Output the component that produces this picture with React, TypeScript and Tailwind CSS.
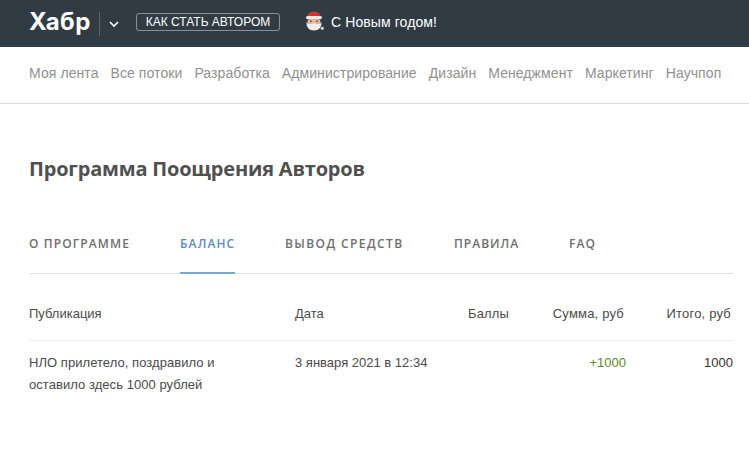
export default function App() {
  const nav = ["Моя лента", "Все потоки", "Разработка", "Администрирование", "Дизайн", "Менеджмент", "Маркетинг", "Научпоп"];
  const tabs = ["О ПРОГРАММЕ", "БАЛАНС", "ВЫВОД СРЕДСТВ", "ПРАВИЛА", "FAQ"];
  return (
    <div className="w-[749px] h-[453px] overflow-hidden bg-white font-['Liberation_Sans',sans-serif]">
      <header className="h-[47px] bg-[#303b44] flex items-center pl-[29px] pb-[3px] text-white">
        <span className="font-['Inter',sans-serif] font-bold text-[24px] tracking-[0.4px] leading-none w-[70px] whitespace-nowrap">Хабр</span>
        <span className="w-px h-[24px] bg-[#5a646c] mt-[3px]" />
        <svg className="ml-[8px] mt-[3px]" width="12" height="8" viewBox="0 0 12 8" fill="none">
          <path d="M2 2l4 4 4-4" stroke="#fff" strokeWidth="1.6" />
        </svg>
        <span className="ml-[16px] h-[18px] w-[144px] border border-[#87929a] rounded-[3px] flex items-center justify-center text-[12px] leading-none">КАК СТАТЬ АВТОРОМ</span>
        <span className="ml-[24px] w-[20px] h-[20px] -mt-[3px]">
          <svg width="20" height="20" viewBox="0 0 20 20">
            <path d="M3 7C3 3 6 .5 10 .5S17 3 17 7z" fill="#d8342f" />
            <rect x="2" y="5" width="16" height="3.200" rx="1.600" fill="#f3e9e4" />
            <rect x="3.500" y="8" width="13" height="7" rx="3" fill="#e2b79e" />
            <path d="M2.500 11c1 2 2.500 2.200 4.500 2 1.500-1 4.500-1 6 0 2 .2 3.500 0 4.500-2 .3 5-2.500 8.500-7.500 8.500S2.200 16 2.500 11z" fill="#efedeb" />
            <rect x="6.300" y="9.500" width="1.400" height="1.600" fill="#5a4336" />
            <rect x="12.300" y="9.500" width="1.400" height="1.600" fill="#5a4336" />
            <circle cx="18.300" cy="17.200" r="1.500" fill="#f2f2f2" />
          </svg>
        </span>
        <span className="ml-[7px] text-[14px] tracking-[0.1px]">С Новым годом!</span>
      </header>
      <nav className="h-[57px] border-b border-[#dedede] flex items-center pl-[29px] pb-[4px] gap-[12px] text-[14px] tracking-[0.08px] text-[#909090] whitespace-nowrap">
        {nav.map((n) => (
          <span key={n}>{n}</span>
        ))}
      </nav>
      <main className="pl-[29px] pr-[16px]">
        <h1 className="mt-[52px] -translate-y-px font-['Open_Sans',sans-serif] font-bold text-[20px] tracking-[-0.2px] leading-[28px] text-[#505050]">Программа Поощрения Авторов</h1>
        <div className="mt-[33px] h-[57px] border-b border-[#dde1e4] flex font-['Open_Sans',sans-serif] font-semibold text-[12px] tracking-[1.1px] text-[#6e6e6e]">
          {tabs.map((t, i) => (
            <span
              key={t}
              className={
                "h-[57px] pt-[18px] whitespace-nowrap " +
                (i === 1 ? "text-[#5b8cb9] border-b-2 border-[#7ba7cf] w-[55px] mr-[50px]" : i === 0 ? "w-[101px] mr-[50px]" : i === 2 ? "w-[119px] mr-[50px] tracking-[1.4px]" : i === 3 ? "w-[65px] mr-[50px] tracking-[1px]" : "")
              }
            >
              {t}
            </span>
          ))}
        </div>
        <div className="w-[704px] text-[13px] text-[#4a4a4a]">
          <div className="h-[67px] border-b border-[#eeeeee] flex items-center pt-[13px]">
            <span className="w-[266px]">Публикация</span>
            <span className="w-[173px]">Дата</span>
            <span className="w-[60px] tracking-[0.15px]">Баллы</span>
            <span className="w-[96px] text-right tracking-[0.2px] whitespace-nowrap">Сумма, руб</span>
            <span className="w-[109px] text-right pr-[2px] tracking-[0.2px] whitespace-nowrap">Итого, руб</span>
          </div>
          <div className="flex pt-[11px] leading-[22px]">
            <span className="w-[266px] tracking-[0.05px]">НЛО прилетело, поздравило и<br />оставило здесь 1000 рублей</span>
            <span className="w-[173px]">3 января 2021 в 12:34</span>
            <span className="w-[60px]" />
            <span className="w-[98px] text-right text-[#5d8a1e]">+1000</span>
            <span className="w-[107px] text-right text-[#333333]">1000</span>
          </div>
        </div>
      </main>
    </div>
  );
}
